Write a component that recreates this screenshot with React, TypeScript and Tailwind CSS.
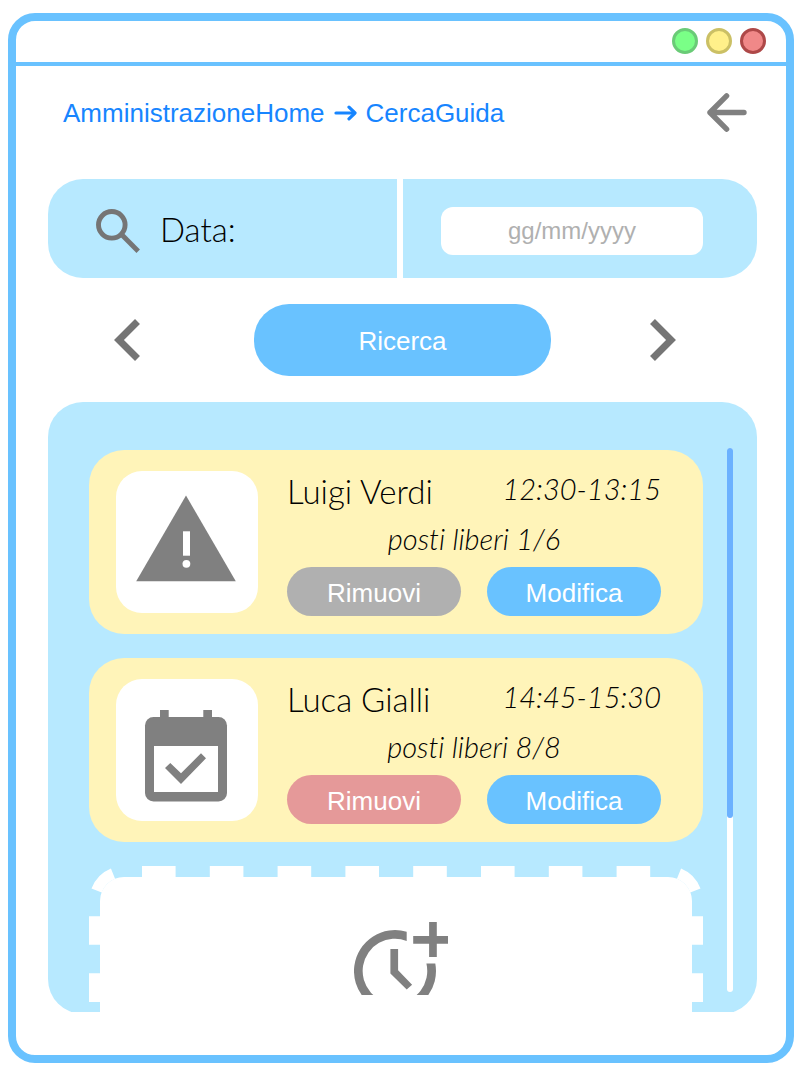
import type { ReactNode } from "react";

const sans = "font-['Liberation_Sans',Arial,sans-serif]";

type Guide = {
  name: string;
  time: string;
  seats: string;
  removable: boolean;
  icon: ReactNode;
};

function SearchIcon() {
  return (
    <svg viewBox="0 0 44 44" className="size-11" fill="none" stroke="#757575" strokeWidth="4.9" aria-hidden="true">
      <circle cx="15.8" cy="15.8" r="13.3" />
      <path d="M24.6 24.6 42.2 42.2" />
    </svg>
  );
}

function WarningIcon() {
  return (
    <svg viewBox="0 0 142 142" className="size-full" aria-hidden="true">
      <path d="M70 24.5 119.8 110.3H20.2Z" fill="#808080" />
      <path d="M67 60.3h7v24.4h-7z" fill="#fff" />
      <circle cx="70.4" cy="92.8" r="3.9" fill="#fff" />
    </svg>
  );
}

function CalendarIcon() {
  return (
    <svg viewBox="0 0 142 142" className="size-full" aria-hidden="true">
      <rect x="29" y="38" width="82" height="84.5" rx="8.5" fill="#808080" />
      <path d="M44 31h8.7v8H44zM87.3 31H96v8h-8.7z" fill="#808080" />
      <path d="M38 67h64v46H38z" fill="#fff" />
      <path d="M49 89l5.3-5L65 94.3l20-20 5 5L65 105z" fill="#808080" />
    </svg>
  );
}

function MoreTimeIcon() {
  return (
    <svg viewBox="0 0 94 73" className="h-[73px] w-[94px]" aria-hidden="true">
      <g fill="#808080">
        <path d="M75.1 0h7.7v13.9H95v7.8H82.8V35h-7.7V21.7H59.2v-7.8h15.9z" />
        <path d="M36.4 27h7.7v21.3l14 14.4-5.4 4.8-16.3-16.1z" />
        <path d="M52.7 9.8A41 41 0 1 0 81.3 41.6H72.4A32.3 32.3 0 1 1 52.7 18.9Z" />
      </g>
    </svg>
  );
}

function DashedEdge() {
  return (
    <svg
      viewBox="0 0 614 146"
      preserveAspectRatio="none"
      className="absolute inset-0 size-full"
      fill="none"
      stroke="#fff"
      strokeWidth="11"
      aria-hidden="true"
    >
      <path d="M53 5.5H561.5" strokeDasharray="33.6 34.2" />
      <path d="M5.5 49.5V146M608.5 49.5V146" strokeDasharray="28.2 28.2" />
      <path d="M7.6 24.2A29.5 29.5 0 0 1 24 7.6M590 7.6A29.5 29.5 0 0 1 606.4 24.2" />
    </svg>
  );
}

function GuideCard({ guide }: { guide: Guide }) {
  return (
    <article className="flex h-[184px] gap-[29px] rounded-[35px] bg-[#fff4b9] pt-[21px] pr-[42px] pl-[27px]">
      <div className="size-[142px] shrink-0 rounded-[26px] bg-white">{guide.icon}</div>
      <div className="flex-1">
        <div className="flex h-10 justify-between leading-10 whitespace-nowrap">
          <h2 className="text-[33px] leading-10">{guide.name}</h2>
          <p className="text-[29px] leading-9 italic">{guide.time}</p>
        </div>
        <p className="h-14 text-center text-[29px] leading-14 italic">
          posti liberi {guide.seats}
        </p>
        <div className={`grid grid-cols-2 gap-[26px] text-[26px] font-normal text-white ${sans}`}>
          <button
            type="button"
            disabled={!guide.removable}
            className={`h-[49px] rounded-full pt-[3px] ${guide.removable ? "bg-[#e59999]" : "bg-[#b0b0b0]"}`}
          >
            Rimuovi
          </button>
          <button type="button" className="h-[49px] rounded-full bg-[#69c2ff] pt-[3px]">
            Modifica
          </button>
        </div>
      </div>
    </article>
  );
}

const guides: Guide[] = [
  { name: "Luigi Verdi", time: "12:30-13:15", seats: "1/6", removable: false, icon: <WarningIcon /> },
  { name: "Luca Gialli", time: "14:45-15:30", seats: "8/8", removable: true, icon: <CalendarIcon /> },
];

export default function App() {
  return (
    <div className="min-h-screen bg-white pt-[13px] pr-[5px] pb-[10px] pl-2 font-['Lato',sans-serif] font-light text-black [font-variant-ligatures:none]">
      <div className="rounded-[27px] border-8 border-[#69c2ff]">
        <header className="flex h-[45px] items-start justify-end gap-2 border-b-4 border-[#69c2ff] pt-[7px] pr-5">
          <button type="button" aria-label="Riduci" className="size-[26px] rounded-full border-[3px] border-[#6acb77] bg-[#7aff87]" />
          <button type="button" aria-label="Ingrandisci" className="size-[26px] rounded-full border-[3px] border-[#cbc065] bg-[#fff08a]" />
          <button type="button" aria-label="Chiudi" className="size-[26px] rounded-full border-[3px] border-[#ae4848] bg-[#f08888]" />
        </header>

        <main className="pt-[26px] pr-[29px] pb-[43px] pl-8">
          <div className="flex h-10 items-center justify-between pr-[10px] pl-[15px]">
            <nav className={`flex items-center gap-[9px] pt-[2px] text-[26px] font-normal text-[#1785ff] ${sans}`}>
              <a href="#home">AmministrazioneHome</a>
              <svg viewBox="0 0 23 16" className="h-4 w-[23px]" fill="none" stroke="currentColor" strokeLinecap="round" aria-hidden="true">
                <path d="M2 8H18" strokeWidth="3.2" />
                <path d="M15 2.2 21 8 15 13.8" strokeWidth="3.2" strokeLinejoin="round" />
              </svg>
              <a href="#cerca">CercaGuida</a>
            </nav>
            <button type="button" aria-label="Indietro">
              <svg viewBox="0 0 40 40" className="size-10" fill="none" stroke="#808080" strokeWidth="5.4" strokeLinecap="round" strokeLinejoin="round" aria-hidden="true">
                <path d="M19.6 3.8 3 20.5 19.6 37.2M3 20.5H37" />
              </svg>
            </button>
          </div>

          <form className="mt-[47px]" onSubmit={(e) => e.preventDefault()}>
            <div className="grid h-[99px] grid-cols-[349fr_354fr] gap-[6px]">
              <div className="flex gap-5 rounded-l-[35px] bg-[#b7e9ff] pt-[30px] pl-12">
                <SearchIcon />
                <label htmlFor="data" className="text-[33px] leading-10">
                  Data:
                </label>
              </div>
              <div className="flex items-center rounded-r-[35px] bg-[#b7e9ff] pt-1 pr-[54px] pl-[38px]">
                <input
                  id="data"
                  type="text"
                  placeholder="gg/mm/yyyy"
                  className={`h-12 w-full rounded-xl bg-white text-center text-[24px] font-normal placeholder:text-[#b0b0b0] ${sans}`}
                />
              </div>
            </div>

            <div className="mt-[26px] grid h-[72px] grid-cols-[1fr_297px_1fr]">
              <button type="button" aria-label="Precedente" className="flex items-center pl-[66px]">
                <svg viewBox="8 6 7.41 12" className="h-[42px] w-[26px]" fill="#757575" aria-hidden="true">
                  <path d="M15.41 7.41 14 6l-6 6 6 6 1.41-1.41L10.83 12z" />
                </svg>
              </button>
              <button type="submit" className={`rounded-[35px] bg-[#69c2ff] pt-[2px] text-[26px] font-normal text-white ${sans}`}>
                Ricerca
              </button>
              <button type="button" aria-label="Successivo" className="flex items-center justify-end pr-[81px]">
                <svg viewBox="8.59 6 7.41 12" className="h-[42px] w-[26px]" fill="#757575" aria-hidden="true">
                  <path d="M10 6 8.59 7.41 13.17 12l-4.58 4.59L10 18l6-6z" />
                </svg>
              </button>
            </div>
          </form>

          <section aria-label="Guide" className="mt-[26px] h-[610px] overflow-hidden">
            <div className="flex h-[612px] gap-6 rounded-[35px] bg-[#b7e9ff] pr-6 pl-[41px]">
              <div className="flex flex-1 flex-col gap-6 pt-12">
                {guides.map((guide) => (
                  <GuideCard key={guide.name} guide={guide} />
                ))}
                <div className="relative flex-1 pt-[11px]">
                  <DashedEdge />
                  <button
                    type="button"
                    aria-label="Aggiungi orario"
                    className="mx-[11px] flex h-[137px] w-[calc(100%-22px)] justify-center rounded-t-[24px] bg-white pt-[45px] pl-[10px]"
                  >
                    <MoreTimeIcon />
                  </button>
                </div>
              </div>
              <div className="mt-[46px] h-[544px] w-[6px] rounded-full bg-white">
                <div className="h-[370px] rounded-full bg-[#6bb1ff]" />
              </div>
            </div>
          </section>
        </main>
      </div>
    </div>
  );
}
